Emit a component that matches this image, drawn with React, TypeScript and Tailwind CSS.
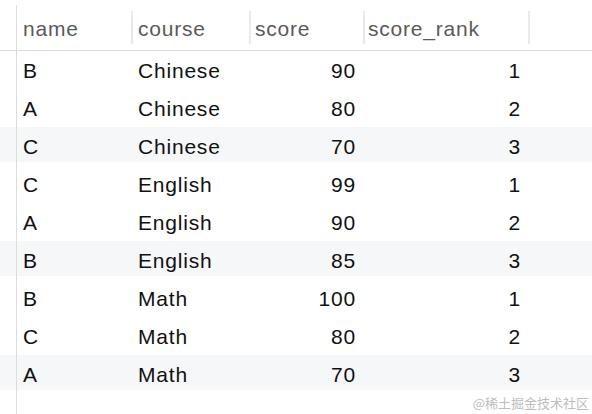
import React from "react";

const rows = [
  ["B", "Chinese", "90", "1"],
  ["A", "Chinese", "80", "2"],
  ["C", "Chinese", "70", "3"],
  ["C", "English", "99", "1"],
  ["A", "English", "90", "2"],
  ["B", "English", "85", "3"],
  ["B", "Math", "100", "1"],
  ["C", "Math", "80", "2"],
  ["A", "Math", "70", "3"],
];

const font = { fontFamily: '"Liberation Sans", Arial, sans-serif' };

function Sep({ visible }: { visible: boolean }) {
  return (
    <div
      className={
        "w-[2px] h-[33px] shrink-0 " + (visible ? "bg-[#e9e9e9]" : "bg-transparent")
      }
    />
  );
}

export default function App() {
  return (
    <div
      className="relative w-[592px] h-[414px] bg-white overflow-hidden flex flex-col text-[21px] tracking-[0.8px]"
      style={font}
    >
      {/* header */}
      <div className="flex h-[51px] border-b border-[#dcdcdc] shrink-0">
        <div className="w-4 shrink-0" />
        <div className="mt-[5px] flex-1 border-l border-[#dcdcdc] flex items-center text-[#5a5a5a]">
          <div className="w-[114px] pl-[6px] pt-[2px]">name</div>
          <Sep visible />
          <div className="w-[116px] pl-[5px] pt-[2px]">course</div>
          <Sep visible />
          <div className="w-[112px] pl-[4px] pt-[2px]">score</div>
          <Sep visible />
          <div className="w-[163px] pl-[3px] pt-[2px]">score_rank</div>
          <Sep visible />
        </div>
      </div>
      {rows.map((r, i) => (
        <div
          key={i}
          className={
            "flex h-[38px] shrink-0 " +
            (i % 3 === 2
              ? "bg-[linear-gradient(to_bottom,#f6f7f8_35px,transparent_35px)]"
              : "")
          }
        >
          <div className="w-4 shrink-0" />
          <div className="flex-1 border-l border-[#dcdcdc] flex items-center text-[#111] pt-[2px]">
            <div className="w-[114px] pl-[6px]">{r[0]}</div>
            <Sep visible={false} />
            <div className="w-[116px] pl-[5px]">{r[1]}</div>
            <Sep visible={false} />
            <div className="w-[112px] pr-[7px] text-right">{r[2]}</div>
            <Sep visible={false} />
            <div className="w-[163px] pr-[7px] text-right">{r[3]}</div>
            <Sep visible={false} />
          </div>
        </div>
      ))}
      <div className="flex flex-1">
        <div className="w-4 shrink-0" />
        <div className="flex-1 border-l border-[#dcdcdc]" />
      </div>
      <div
        className="absolute right-[3px] bottom-[5px] text-[13px] tracking-normal text-[#bdbdbd] leading-none"
        style={{ fontFamily: '"Noto Sans CJK SC", "Liberation Sans", sans-serif' }}
      >
        @稀土掘金技术社区
      </div>
    </div>
  );
}
